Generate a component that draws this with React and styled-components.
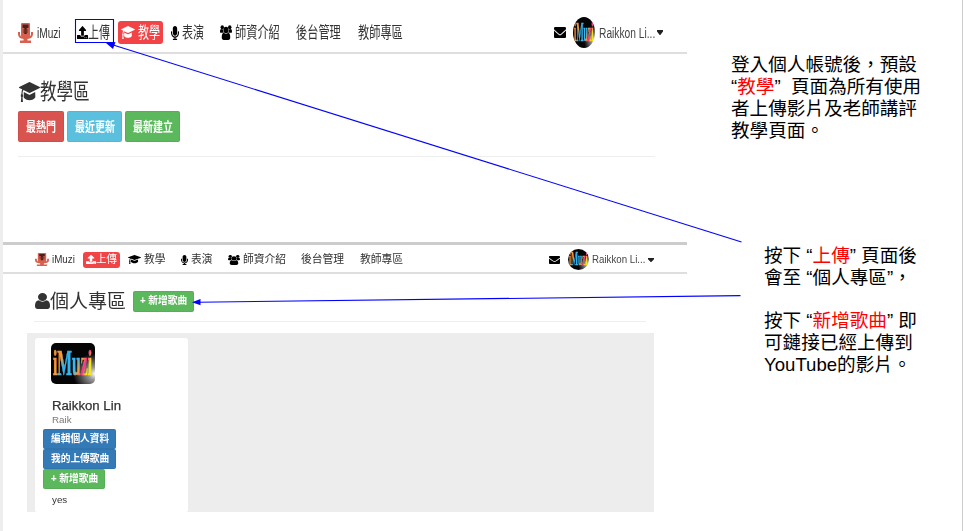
import React, { useId } from "react";
import styled, { createGlobalStyle, css } from "styled-components";
import { FaMicrophone, FaUpload, FaEnvelope, FaCaretDown } from "react-icons/fa";

const GlobalStyle = createGlobalStyle`
  * { box-sizing: border-box; }
  body { margin: 0; background: #fff; overflow: hidden; }
`;

const sans = `"Liberation Sans", "Noto Sans CJK TC", sans-serif`;

const Page = styled.div`
  position: relative;
  display: grid;
  grid-template-columns: 684px 1fr;
  width: 963px;
  height: 531px;
  border-left: 3px solid #eee;
  border-right: 1px solid #ccc;
  background: #fff;
  font-family: ${sans};
  overflow: hidden;
`;

const Shots = styled.div`
  display: flex;
  flex-direction: column;
  filter: blur(0.45px);
`;

const Shot = styled.section`
  height: ${(p) => p.$h}px;
`;

const NavBar = styled.nav`
  display: flex;
  align-items: center;
  height: ${(p) => p.$h}px;
  padding-top: ${(p) => p.$pt}px;
  padding-left: ${(p) => p.$pl}px;
  border-top: ${(p) => (p.$divided ? "3px solid #ccc" : "0")};
  border-bottom: 2px solid #dedede;
`;

const NavItem = styled.div`
  display: flex;
  flex: none;
  align-items: center;
  width: ${(p) => p.$w}px;
  height: ${(p) => p.$h || 22}px;
  margin-left: ${(p) => p.$ml || 0}px;
  padding-left: ${(p) => p.$pl || 0}px;
  gap: ${(p) => p.$gap || 0}px;
  color: #000;
  ${(p) =>
    p.$active &&
    css`
      background: #f24346;
      border-radius: 3px;
      color: #fff;
    `}
`;

const Icon = styled.span`
  display: flex;
  flex: none;
  width: ${(p) => p.$w}px;
  height: ${(p) => p.$h}px;
  color: ${(p) => p.$color || "inherit"};
  svg {
    width: 100%;
    height: 100%;
  }
`;

const LabelBox = styled.span`
  display: flex;
  flex: none;
  align-items: center;
  width: ${(p) => p.$w}px;
  height: ${(p) => p.$size}px;
`;

const LabelText = styled.span`
  flex: none;
  white-space: nowrap;
  font-size: ${(p) => p.$size}px;
  line-height: 1;
  font-weight: ${(p) => p.$weight || 400};
  color: ${(p) => p.$color || "inherit"};
  transform: scaleX(${(p) => p.$sx || 1});
  transform-origin: left center;
`;

const Label = ({ w, size, sx, weight, color, children }) => (
  <LabelBox $w={w} $size={size}>
    <LabelText $size={size} $sx={sx} $weight={weight} $color={color}>
      {children}
    </LabelText>
  </LabelBox>
);

const Glyph = ({ as: Shape, w, h, color, viewBox }) => (
  <Icon $w={w} $h={h} $color={color}>
    <Shape preserveAspectRatio="none" {...(viewBox ? { viewBox } : {})} />
  </Icon>
);

const Heading = styled.div`
  display: flex;
  align-items: center;
  height: ${(p) => p.$h}px;
  margin-top: ${(p) => p.$mt}px;
  margin-left: ${(p) => p.$ml}px;
  color: #333;
`;

const ButtonRow = styled.div`
  display: flex;
  gap: 3px;
  margin: 7px 0 0 15px;
`;

const Button = styled.div`
  display: flex;
  flex: none;
  align-items: center;
  width: ${(p) => p.$w}px;
  height: ${(p) => p.$h}px;
  margin-left: ${(p) => p.$ml || 0}px;
  padding-left: ${(p) => p.$pl || 8}px;
  border-radius: 2px;
  background: ${(p) => p.$bg};
  box-shadow: inset 0 0 0 1px rgba(0, 0, 0, 0.05);
  color: #fff;
`;

const Rule = styled.div`
  width: ${(p) => p.$w}px;
  height: 1px;
  margin: ${(p) => p.$mt}px 0 0 ${(p) => p.$ml}px;
  background: #eee;
`;

const Panel = styled.div`
  width: 627px;
  height: 179px;
  margin: 11px 0 0 24px;
  padding: 5px 0 0 8px;
  background: #ededed;
`;

const Card = styled.div`
  display: flex;
  flex-direction: column;
  align-items: flex-start;
  width: 153px;
  height: 174px;
  padding: 5px 0 0 8px;
  border-radius: 3px 3px 2px 2px;
  background: #fff;
`;

const Portrait = styled.div`
  display: flex;
  width: 44px;
  height: 41px;
  margin-left: 8px;
  border-radius: 5px;
  overflow: hidden;
`;

const CardLine = styled.div`
  display: flex;
  align-items: center;
  height: ${(p) => p.$h}px;
  margin-top: ${(p) => p.$mt || 0}px;
  margin-bottom: ${(p) => p.$mb || 0}px;
  padding-left: 9px;
`;

const Medium = styled.span`
  -webkit-text-stroke: 0.25px currentColor;
`;

const RoundAvatar = styled.span`
  display: flex;
  flex: none;
  width: ${(p) => p.$w}px;
  height: ${(p) => p.$h}px;
  margin-left: ${(p) => p.$ml}px;
  border-radius: 50%;
  overflow: hidden;
`;

const Notes = styled.aside`
  display: flex;
  flex-direction: column;
  padding-top: 54px;
`;

const Note = styled.div`
  margin-left: ${(p) => p.$ml}px;
  margin-top: ${(p) => p.$mt || 0}px;
  font-size: 18.6px;
  color: #000;
`;

const NoteLine = styled.div`
  height: ${(p) => p.$h || 22}px;
  line-height: 22px;
  white-space: pre;
`;

const Red = styled.span`
  color: #f00;
`;

const Overlay = styled.svg`
  position: absolute;
  left: -3px;
  top: 0;
  pointer-events: none;
`;

const Art = () => {
  const id = useId().replace(/[^a-zA-Z0-9]/g, "");
  return (
    <svg width="100%" height="100%" viewBox="0 0 44 41" preserveAspectRatio="none">
      <defs>
        <radialGradient id={`${id}s`} cx="1" cy="0.75" r="0.5">
          <stop offset="0" stopColor="#fff" />
          <stop offset="0.3" stopColor="#999" />
          <stop offset="1" stopColor="#050505" />
        </radialGradient>
        <linearGradient id={`${id}t`} x1="0" y1="0" x2="1" y2="0.35">
          <stop offset="0" stopColor="#f4ee1c" />
          <stop offset="0.12" stopColor="#f08a3c" />
          <stop offset="0.3" stopColor="#ff9c30" />
          <stop offset="0.42" stopColor="#2fb0ee" />
          <stop offset="0.7" stopColor="#3cb8ee" />
          <stop offset="0.8" stopColor="#f0a040" />
          <stop offset="0.9" stopColor="#ff2c90" />
          <stop offset="1" stopColor="#f4e41c" />
        </linearGradient>
      </defs>
      <rect width="44" height="41" fill={`url(#${id}s)`} />
      <g transform="translate(2 32) scale(1 1.8)">
        <text
          x="0"
          y="0"
          textLength="39"
          lengthAdjust="spacingAndGlyphs"
          fontFamily="Liberation Serif, serif"
          fontWeight="700"
          fontSize="20"
          fill={`url(#${id}t)`}
          stroke={`url(#${id}t)`}
          strokeWidth="0.4"
        >
          iMuzi
        </text>
      </g>
    </svg>
  );
};

const StudioMic = () => (
  <svg viewBox="0 0 15 20" preserveAspectRatio="none">
    <path
      d="M1 9v2.200c0 2.400 2.600 3.900 6.500 3.900s6.500-1.500 6.500-3.900V9"
      fill="none"
      stroke="#d9604f"
      strokeWidth="2"
    />
    <path d="M5.500 14h4v3.500h3.500v2.500h-11v-2.500h3.500z" fill="#d9604f" />
    <rect x="3" y="0" width="9" height="14" rx="1" fill="#d9604f" />
    <path d="M4.500 1.500h6v3.600h-6zM6.300 4h2.400v7h-2.400z" fill="#48201c" />
    <path d="M4.800 7h5.400M4.800 9h5.400" stroke="#70332b" strokeWidth="1" />
  </svg>
);

const Group = () => (
  <svg viewBox="0 0 24 24" preserveAspectRatio="none" fill="currentColor">
    <circle cx="4.500" cy="3.600" r="3.400" />
    <circle cx="19.500" cy="3.600" r="3.400" />
    <circle cx="12" cy="8" r="5.200" />
    <path d="M0 11c0-3 1-4.500 2.500-4.500 1 .8 2.500 1 3.700.6C6 9.500 6.500 11 8 12.500H2C.8 12.500 0 12 0 11zM24 11c0-3-1-4.500-2.500-4.500-1 .8-2.500 1-3.700.6.2 2.400-.3 3.900-1.800 5.400h6c1.200 0 2-.5 2-1.500z" />
    <path d="M3.500 20c0-4.500 1-7.500 4.200-7.700 2.600 2 6 2 8.600 0 3.200.2 4.200 3.200 4.200 7.700 0 2.500-1.500 4-4 4h-9c-2.500 0-4-1.500-4-4z" />
  </svg>
);

const Mortarboard = () => (
  <svg viewBox="0 128 2304 1408" preserveAspectRatio="none" fill="currentColor">
    <path d="M1774 836l18 316q4 69-82 128t-235 93.500-323 34.500-323-34.500-235-93.500-82-128l18-316 574 181q22 7 48 7t48-7zM2304 512q0 23-22 31l-1120 352q-4 1-10 1t-10-1l-652-206q-43 34-71 111.500t-34 178.500q63 36 63 109 0 69-58 107l58 433q2 14-8 25-9 11-24 11h-192q-15 0-24-11-10-11-8-25l58-433q-58-38-58-107 0-73 65-111 11-207 98-330l-333-104q-22-8-22-31t22-31l1120-352q4-1 10-1t10 1l1120 352q22 8 22 31z" />
  </svg>
);

const Person = () => (
  <svg viewBox="0 128 1280 1536" preserveAspectRatio="none" fill="currentColor">
    <path d="M1280 1399q0 109-62.500 187t-150.500 78h-854q-88 0-150.500-78t-62.500-187q0-85 8.500-160.500t31.500-152 58.500-131 94-89 134.500-34.500q131 128 313 128t313-128q76 0 134.500 34.500t94 89 58.500 131 31.500 152 8.500 160.500zM1024 512q0 159-112.500 271.500t-271.500 112.500-271.500-112.500-112.500-271.500 112.500-271.500 271.500-112.500 271.500 112.500 112.500 271.500z" />
  </svg>
);

const micBox = "0 0 352 512";
const caretBox = "31 192 258 163";
const mailBox = "0 64 512 384";

const TeachingShot = () => (
  <Shot $h={242}>
    <NavBar $h={54} $pt={13} $pl={15}>
      <NavItem $w={57} $gap={4}>
        <Glyph as={StudioMic} w={15} h={20} />
        <Label w={30} size={14} sx={0.72} color="#333">iMuzi</Label>
      </NavItem>
      <NavItem $w={36} $ml={2}>
        <Glyph as={FaUpload} w={11} h={13} />
        <Label w={22} size={16} sx={0.68} color="#333">上傳</Label>
      </NavItem>
      <NavItem $w={45} $h={23} $ml={5} $pl={3} $gap={3} $active>
        <Glyph as={Mortarboard} w={14} h={13} />
        <Label w={22} size={16} sx={0.69}>教學</Label>
      </NavItem>
      <NavItem $w={34} $ml={8} $gap={3}>
        <Glyph as={FaMicrophone} w={8} h={14} viewBox={micBox} />
        <Label w={22} size={16} sx={0.69} color="#333">表演</Label>
      </NavItem>
      <NavItem $w={61} $ml={15} $gap={3}>
        <Glyph as={Group} w={12} h={15} />
        <Label w={45} size={16} sx={0.7} color="#333">師資介紹</Label>
      </NavItem>
      <NavItem $w={45} $ml={15}>
        <Label w={45} size={16} sx={0.7} color="#333">後台管理</Label>
      </NavItem>
      <NavItem $w={45} $ml={17}>
        <Label w={45} size={16} sx={0.7} color="#333">教師專區</Label>
      </NavItem>
      <NavItem $w={12} $ml={151}>
        <Glyph as={FaEnvelope} w={12} h={11} viewBox={mailBox} />
      </NavItem>
      <RoundAvatar $w={22} $h={31} $ml={7}>
        <Art />
      </RoundAvatar>
      <NavItem $w={66} $ml={4} $gap={2}>
        <Label w={56} size={14} sx={0.73} color="#444">Raikkon Li...</Label>
        <Glyph as={FaCaretDown} w={6} h={5} viewBox={caretBox} color="#222" />
      </NavItem>
    </NavBar>
    <Heading $h={24} $mt={26} $ml={16}>
      <Glyph as={Mortarboard} w={21} h={20} />
      <Label w={52} size={22} sx={0.75}>教學區</Label>
    </Heading>
    <ButtonRow>
      <Button $w={46} $h={31} $bg="#d9534f">
        <Label w={30} size={13} sx={0.77} weight={700}>最熱門</Label>
      </Button>
      <Button $w={55} $h={31} $bg="#5bc0de">
        <Label w={40} size={13} sx={0.77} weight={700}>最近更新</Label>
      </Button>
      <Button $w={55} $h={31} $bg="#5cb85c">
        <Label w={40} size={13} sx={0.77} weight={700}>最新建立</Label>
      </Button>
    </ButtonRow>
    <Rule $w={637} $mt={14} $ml={15} />
  </Shot>
);

const ProfileShot = () => (
  <Shot $h={289}>
    <NavBar $h={32} $pt={2} $pl={32} $divided>
      <NavItem $w={41} $gap={3}>
        <Glyph as={StudioMic} w={14} h={13} />
        <Label w={24} size={10} sx={0.98} color="#333">iMuzi</Label>
      </NavItem>
      <NavItem $w={37} $h={16} $ml={7} $pl={3} $active>
        <Glyph as={FaUpload} w={10} h={9} />
        <Label w={21} size={11} sx={0.95}>上傳</Label>
      </NavItem>
      <NavItem $w={38} $ml={8} $gap={3}>
        <Glyph as={Mortarboard} w={13} h={9} />
        <Label w={22} size={11} sx={0.97} color="#333">教學</Label>
      </NavItem>
      <NavItem $w={32} $ml={15} $gap={3}>
        <Glyph as={FaMicrophone} w={7} h={10} viewBox={micBox} />
        <Label w={22} size={11} sx={0.97} color="#333">表演</Label>
      </NavItem>
      <NavItem $w={58} $ml={15} $gap={3}>
        <Glyph as={Group} w={12} h={10} />
        <Label w={43} size={11} sx={0.98} color="#333">師資介紹</Label>
      </NavItem>
      <NavItem $w={43} $ml={15}>
        <Label w={43} size={11} sx={0.98} color="#333">後台管理</Label>
      </NavItem>
      <NavItem $w={43} $ml={16}>
        <Label w={43} size={11} sx={0.98} color="#333">教師專區</Label>
      </NavItem>
      <NavItem $w={11} $ml={146}>
        <Glyph as={FaEnvelope} w={11} h={8} viewBox={mailBox} />
      </NavItem>
      <RoundAvatar $w={21} $h={21} $ml={8}>
        <Art />
      </RoundAvatar>
      <NavItem $w={62} $ml={3} $gap={2}>
        <Label w={54} size={10} sx={0.97} color="#444">Raikkon Li...</Label>
        <Glyph as={FaCaretDown} w={6} h={4} viewBox={caretBox} color="#222" />
      </NavItem>
    </NavBar>
    <Heading $h={22} $mt={16} $ml={32}>
      <Glyph as={Person} w={15} h={16} />
      <Label w={76} size={19} sx={1}>個人專區</Label>
      <Button $w={61} $h={21} $ml={7} $pl={7} $bg="#5cb85c">
        <Label w={47} size={10} sx={0.97} weight={700}>+ 新增歌曲</Label>
      </Button>
    </Heading>
    <Rule $w={612} $mt={9} $ml={31} />
    <Panel>
      <Card>
        <Portrait>
          <Art />
        </Portrait>
        <CardLine $h={16} $mt={14}>
          <Label w={70} size={12} sx={1.1} color="#333">
            <Medium>Raikkon Lin</Medium>
          </Label>
        </CardLine>
        <CardLine $h={12} $mb={3}>
          <Label w={20} size={9.5} sx={1.03} color="#777">Raik</Label>
        </CardLine>
        <Button $w={73} $h={20} $bg="#337ab7">
          <Label w={58} size={10} sx={0.97} weight={700}>編輯個人資料</Label>
        </Button>
        <Button $w={73} $h={20} $bg="#337ab7">
          <Label w={58} size={10} sx={0.97} weight={700}>我的上傳歌曲</Label>
        </Button>
        <Button $w={62} $h={20} $bg="#5cb85c">
          <Label w={47} size={10} sx={0.97} weight={700}>+ 新增歌曲</Label>
        </Button>
        <CardLine $h={14} $mt={4}>
          <Label w={20} size={9.5} sx={1.03} color="#333">yes</Label>
        </CardLine>
      </Card>
    </Panel>
  </Shot>
);

const Pointers = () => (
  <Overlay width="963" height="531" viewBox="0 0 963 531">
    <path d="M75.500 19.500H113.500V42.500H75.500Z" fill="none" stroke="#00f" strokeWidth="1.100" />
    <path d="M741.500 242L110 44" stroke="#00f" strokeWidth="1.100" fill="none" />
    <path d="M106 43L115.500 42L113 49Z" fill="#00f" />
    <path d="M740.500 295.600L198 302.200" stroke="#00f" strokeWidth="1.100" fill="none" />
    <path d="M192 302.300L200.500 299L200.500 305.300Z" fill="#00f" />
  </Overlay>
);

export default function App() {
  return (
    <Page>
      <GlobalStyle />
      <Shots>
        <TeachingShot />
        <ProfileShot />
      </Shots>
      <Notes>
        <Note $ml={44}>
          <NoteLine>登入個人帳號後，預設</NoteLine>
          <NoteLine>“<Red>教學</Red>”{"  "}頁面為所有使用</NoteLine>
          <NoteLine>者上傳影片及老師講評</NoteLine>
          <NoteLine>教學頁面。</NoteLine>
        </Note>
        <Note $ml={77} $mt={103}>
          <NoteLine>按下 “<Red>上傳</Red>” 頁面後</NoteLine>
          <NoteLine $h={43}>會至 “個人專區”，</NoteLine>
          <NoteLine>按下 “<Red>新增歌曲</Red>” 即</NoteLine>
          <NoteLine>可鏈接已經上傳到</NoteLine>
          <NoteLine>YouTube的影片。</NoteLine>
        </Note>
      </Notes>
      <Pointers />
    </Page>
  );
}
